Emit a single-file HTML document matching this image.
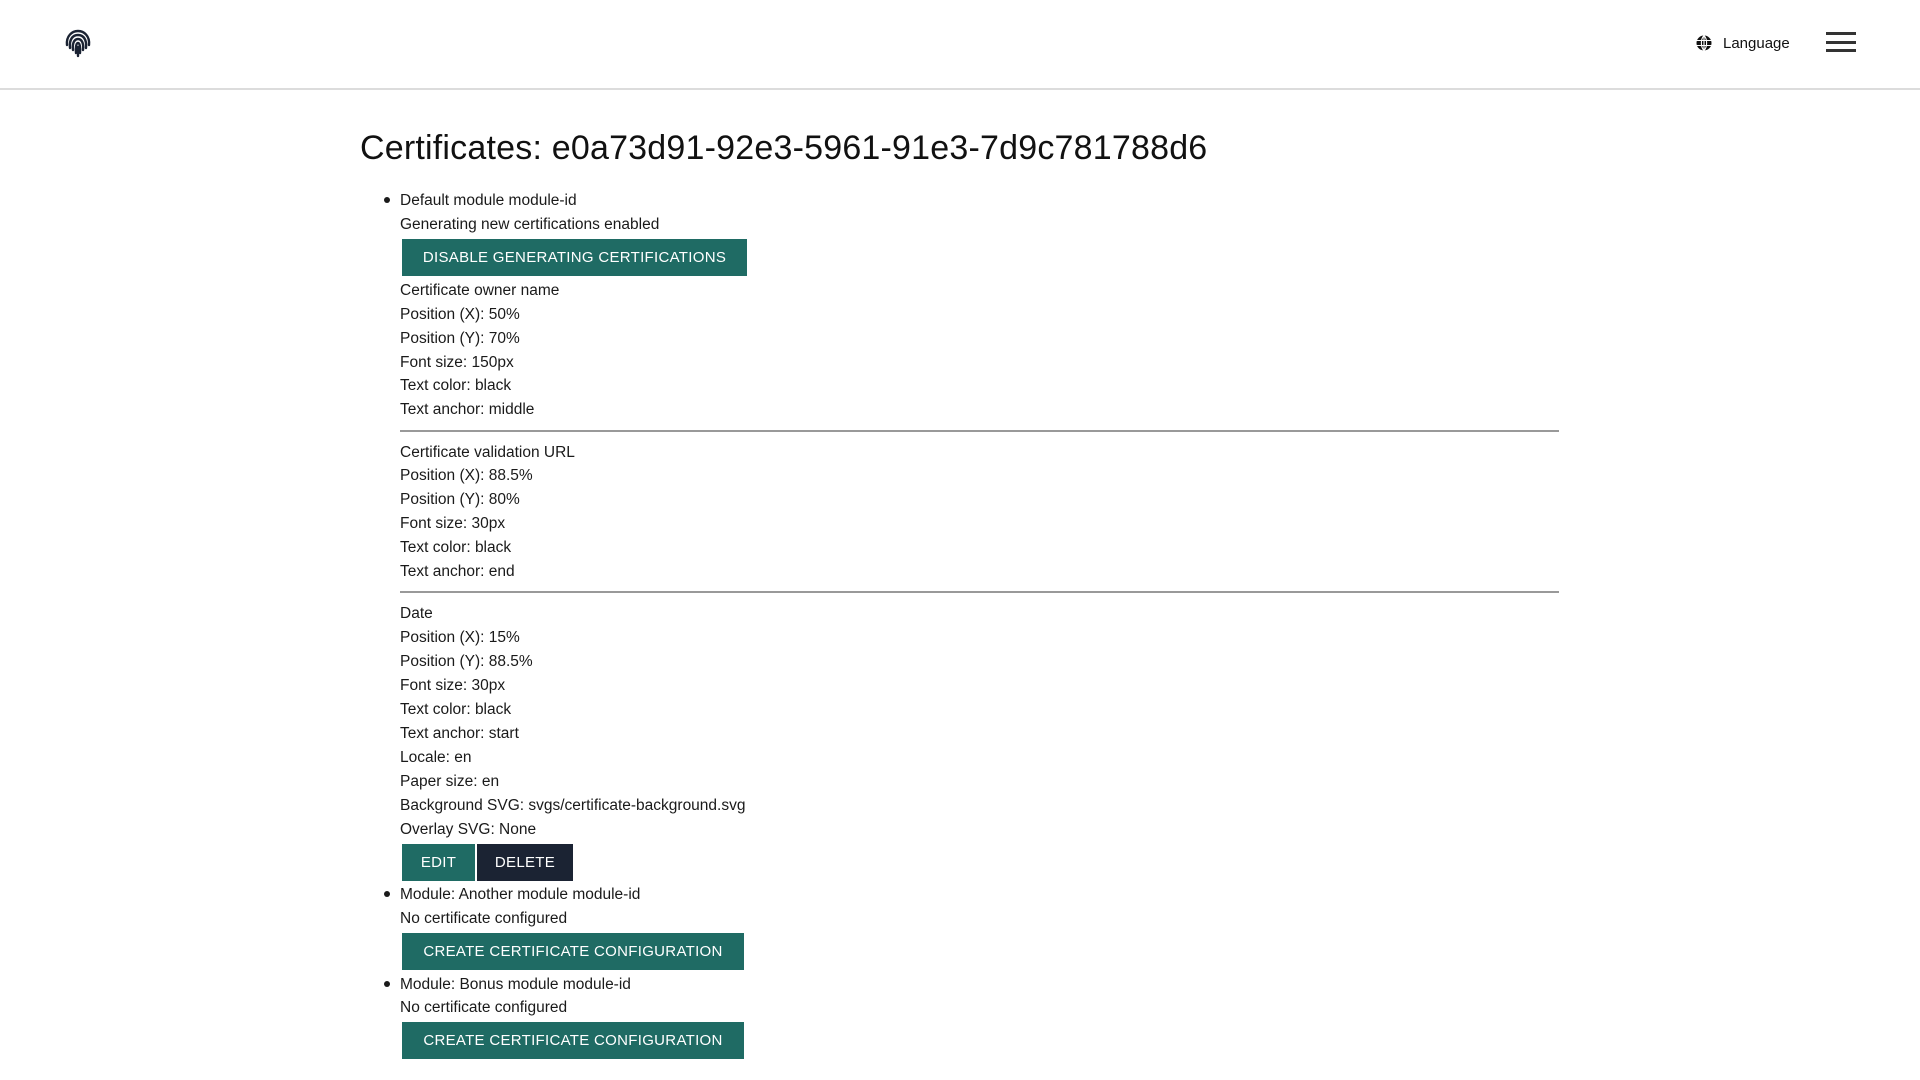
<!DOCTYPE html>
<html><head><meta charset="utf-8"><style>
*{margin:0;padding:0;box-sizing:border-box}
body{width:1920px;height:1080px;background:#fff;font-family:"Liberation Sans",sans-serif;color:#1a1a1a;position:relative;overflow:hidden}
.hdr{position:absolute;left:0;top:0;width:1920px;height:90px;border-bottom:2px solid #dcdcdc}
.l{position:absolute;left:400px;height:24px;line-height:24px;font-size:15.5px;white-space:nowrap}
.b{position:absolute;left:384px;width:6px;height:6px;border-radius:50%;background:#1a1a1a}
.btn{position:absolute;height:37px;line-height:37px;color:#fff;font-size:15px;letter-spacing:.3px;text-align:center;background:#1f6b64}
.hr{position:absolute;left:400px;width:1159px;height:2px;background:#999}
h1{position:absolute;left:360px;top:126px;font-size:34px;letter-spacing:0.2px;font-weight:normal;line-height:44px;white-space:nowrap;color:#111}
</style></head><body>
<div class="hdr"></div>
<svg style="position:absolute;left:63px;top:28px" width="30" height="30" viewBox="0 0 30 30" fill="none" stroke="#1b2333" stroke-width="2.4" stroke-linecap="round">
<path d="M4 17 C3 8 9 3 15 3 C21 3 27 8 26 17"/>
<path d="M7 20 C6 11 10 7 15 7 C20 7 24 11 23 20"/>
<path d="M10 22 C9 14 12 11 15 11 C18 11 21 14 20 22"/>
<path d="M13 25 C12.5 18 13.5 15 15 15 C16.5 15 17.5 18 17 25"/>
<path d="M15 19 L15 28"/>
</svg>
<svg style="position:absolute;left:1696px;top:35px" width="16" height="16" viewBox="0 0 16 16"><circle cx="8" cy="8" r="7.5" fill="#111"/><path d="M0.5 5.5H15.5M0.5 10.5H15.5M8 .5V15.5M8 .5C4.5 4 4.5 12 8 15.5M8 .5C11.5 4 11.5 12 8 15.5" stroke="#fff" stroke-width="1.1" fill="none"/></svg>
<div style="position:absolute;left:1723px;top:32px;font-size:15px;line-height:24px;color:#111">Language</div>
<div style="position:absolute;left:1826px;top:32px;width:30px;height:3px;background:#333"></div>
<div style="position:absolute;left:1826px;top:41px;width:30px;height:3px;background:#333"></div>
<div style="position:absolute;left:1826px;top:49px;width:30px;height:3px;background:#333"></div>

<h1>Certificates: e0a73d91-92e3-5961-91e3-7d9c781788d6</h1>

<div class="b" style="top:197px"></div>
<div class="l" style="top:189px">Default module module-id</div>
<div class="l" style="top:213px">Generating new certifications enabled</div>
<div class="btn" style="left:402px;top:239px;width:345px">DISABLE GENERATING CERTIFICATIONS</div>
<div class="l" style="top:279px">Certificate owner name</div>
<div class="l" style="top:303px">Position (X): 50%</div>
<div class="l" style="top:327px">Position (Y): 70%</div>
<div class="l" style="top:351px">Font size: 150px</div>
<div class="l" style="top:374px">Text color: black</div>
<div class="l" style="top:398px">Text anchor: middle</div>
<div class="hr" style="top:430px"></div>
<div class="l" style="top:441px">Certificate validation URL</div>
<div class="l" style="top:464px">Position (X): 88.5%</div>
<div class="l" style="top:488px">Position (Y): 80%</div>
<div class="l" style="top:512px">Font size: 30px</div>
<div class="l" style="top:536px">Text color: black</div>
<div class="l" style="top:560px">Text anchor: end</div>
<div class="hr" style="top:591px"></div>
<div class="l" style="top:602px">Date</div>
<div class="l" style="top:626px">Position (X): 15%</div>
<div class="l" style="top:650px">Position (Y): 88.5%</div>
<div class="l" style="top:674px">Font size: 30px</div>
<div class="l" style="top:698px">Text color: black</div>
<div class="l" style="top:722px">Text anchor: start</div>
<div class="l" style="top:746px">Locale: en</div>
<div class="l" style="top:770px">Paper size: en</div>
<div class="l" style="top:794px">Background SVG: svgs/certificate-background.svg</div>
<div class="l" style="top:818px">Overlay SVG: None</div>
<div class="btn" style="left:402px;top:844px;width:73px">EDIT</div>
<div class="btn" style="left:477px;top:844px;width:96px;background:#1b2333">DELETE</div>
<div class="b" style="top:891px"></div>
<div class="l" style="top:883px">Module: Another module module-id</div>
<div class="l" style="top:907px">No certificate configured</div>
<div class="btn" style="left:402px;top:933px;width:342px">CREATE CERTIFICATE CONFIGURATION</div>
<div class="b" style="top:981px"></div>
<div class="l" style="top:973px">Module: Bonus module module-id</div>
<div class="l" style="top:996px">No certificate configured</div>
<div class="btn" style="left:402px;top:1022px;width:342px">CREATE CERTIFICATE CONFIGURATION</div>
</body></html>
